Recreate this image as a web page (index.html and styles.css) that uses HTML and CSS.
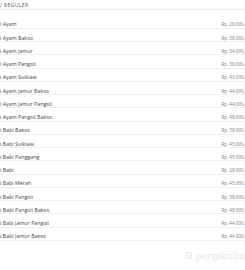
FILE: index.html
```html
<!DOCTYPE html>
<html lang="id">
<head>
  <meta charset="UTF-8" />
  <meta name="viewport" content="width=device-width, initial-scale=1.0" />
  <title>Menu Reguler</title>
  <link rel="stylesheet" href="styles.css">
</head>
<body>
  <div class="menu">
    <div class="menu-title">MENU REGULER</div>
    <div class="menu-list">
      <div class="row"><span class="name">Bakmi Ayam</span><span class="price">Rp. 28.000,-</span></div>
      <div class="row"><span class="name">Bakmi Ayam Bakso</span><span class="price">Rp. 38.000,-</span></div>
      <div class="row"><span class="name">Bakmi Ayam Jamur</span><span class="price">Rp. 34.000,-</span></div>
      <div class="row"><span class="name">Bakmi Ayam Pangsit</span><span class="price">Rp. 38.000,-</span></div>
      <div class="row"><span class="name">Bakmi Ayam Suikiaw</span><span class="price">Rp. 43.000,-</span></div>
      <div class="row"><span class="name">Bakmi Ayam Jamur Bakso</span><span class="price">Rp. 44.000,-</span></div>
      <div class="row"><span class="name">Bakmi Ayam Jamur Pangsit</span><span class="price">Rp. 44.000,-</span></div>
      <div class="row"><span class="name">Bakmi Ayam Pangsit Bakso</span><span class="price">Rp. 48.000,-</span></div>
      <div class="row"><span class="name">Bakmi Babi Bakso</span><span class="price">Rp. 38.000,-</span></div>
      <div class="row"><span class="name">Bakmi Babi Suikiaw</span><span class="price">Rp. 43.000,-</span></div>
      <div class="row"><span class="name">Bakmi Babi Panggang</span><span class="price">Rp. 45.000,-</span></div>
      <div class="row"><span class="name">Bakmi Babi</span><span class="price">Rp. 28.000,-</span></div>
      <div class="row"><span class="name">Bakmi Babi Merah</span><span class="price">Rp. 45.000,-</span></div>
      <div class="row"><span class="name">Bakmi Babi Pangsit</span><span class="price">Rp. 38.000,-</span></div>
      <div class="row"><span class="name">Bakmi Babi Pangsit Bakso</span><span class="price">Rp. 48.000,-</span></div>
      <div class="row"><span class="name">Bakmi Babi Jamur Pangsit</span><span class="price">Rp. 44.000,-</span></div>
      <div class="row"><span class="name">Bakmi Babi Jamur Bakso</span><span class="price">Rp. 44.000,-</span></div>
    </div>
  </div>

  <div class="watermark">
    <svg class="wm-icon" width="7" height="7" viewBox="0 0 7 7">
      <rect x="0.5" y="0.5" width="6" height="6" rx="1" fill="none" stroke="#e2e2e2" stroke-width="1"/>
      <circle cx="3.5" cy="3.5" r="1.4" fill="none" stroke="#e2e2e2" stroke-width="0.8"/>
    </svg>
    <span>pergikuliner</span>
  </div>
</body>
</html>
```

FILE: styles.css
```css
body, html {
  margin: 0;
  padding: 0;
  background: #fff;
  font-family: 'Open Sans', sans-serif;
  height: 100%;
  overflow: hidden;
}

.menu {
  width: 260px;
  margin-left: -14px;
}

.menu-title {
  padding-top: 2px;
  font-size: 5px;
  line-height: 6px;
  letter-spacing: 0.4px;
  color: #555;
  border-bottom: 1.5px solid #ececec;
  padding-bottom: 1.3px;
}

.menu-list {
  padding-top: 5.4px;
}

.row {
  display: flex;
  justify-content: space-between;
  align-items: flex-end;
  box-sizing: border-box;
  height: 13.25px;
  padding-bottom: 0.5px;
  border-bottom: 1px solid #eee;
  line-height: 6px;
}

.name {
  font-size: 5.3px;
  color: #444;
}

.price {
  font-size: 4.5px;
  color: #777;
}

.watermark {
  position: absolute;
  right: -10px;
  top: 250px;
  display: flex;
  align-items: center;
  gap: 3px;
  font-family: 'DejaVu Serif', serif;
  font-size: 9.5px;
  color: #e4e4e4;
}
```
